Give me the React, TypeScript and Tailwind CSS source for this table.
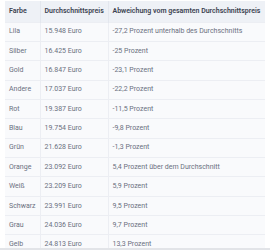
const rows: [string, string, string][] = [
  ["Lila", "15.948 Euro", "-27,2 Prozent unterhalb des Durchschnitts"],
  ["Silber", "16.425 Euro", "-25 Prozent"],
  ["Gold", "16.847 Euro", "-23,1 Prozent"],
  ["Andere", "17.037 Euro", "-22,2 Prozent"],
  ["Rot", "19.387 Euro", "-11,5 Prozent"],
  ["Blau", "19.754 Euro", "-9,8 Prozent"],
  ["Grün", "21.628 Euro", "-1,3 Prozent"],
  ["Orange", "23.092 Euro", "5,4 Prozent über dem Durchschnitt"],
  ["Weiß", "23.209 Euro", "5,9 Prozent"],
  ["Schwarz", "23.991 Euro", "9,5 Prozent"],
  ["Grau", "24.036 Euro", "9,7 Prozent"],
  ["Gelb", "24.813 Euro", "13,3 Prozent"],
];

export default function App() {
  return (
    <div className="bg-white pl-[5px] pr-[5px] pt-[1px] font-['Roboto',sans-serif] text-[7px]">
      <table className="w-full border-collapse table-fixed">
        <colgroup>
          <col className="w-[35px]" />
          <col className="w-[68px]" />
          <col />
        </colgroup>
        <thead>
          <tr className="h-[21px] bg-[#eef1f6] text-left text-[#3b4250]">
            <th className="border-r border-[#e3e7ee] pl-[4px] font-semibold">Farbe</th>
            <th className="border-r border-[#e3e7ee] pl-[4px] font-semibold">Durchschnittspreis</th>
            <th className="pl-[4px] font-semibold">Abweichung vom gesamten Durchschnittspreis</th>
          </tr>
        </thead>
        <tbody className="bg-[#f9fafc] text-[#6b7080]">
          {rows.map(([farbe, preis, abw]) => (
            <tr key={farbe} className="h-[19.35px] border-t border-[#eceef3]">
              <td className="border-r border-[#eceef3] pl-[4px] whitespace-nowrap">{farbe}</td>
              <td className="border-r border-[#eceef3] pl-[4px] whitespace-nowrap">{preis}</td>
              <td className="pl-[4px] whitespace-nowrap">{abw}</td>
            </tr>
          ))}
        </tbody>
      </table>
      <div className="fixed bottom-0 left-0 right-0 h-[2px] bg-[#e2e4e8]" />
    </div>
  );
}
